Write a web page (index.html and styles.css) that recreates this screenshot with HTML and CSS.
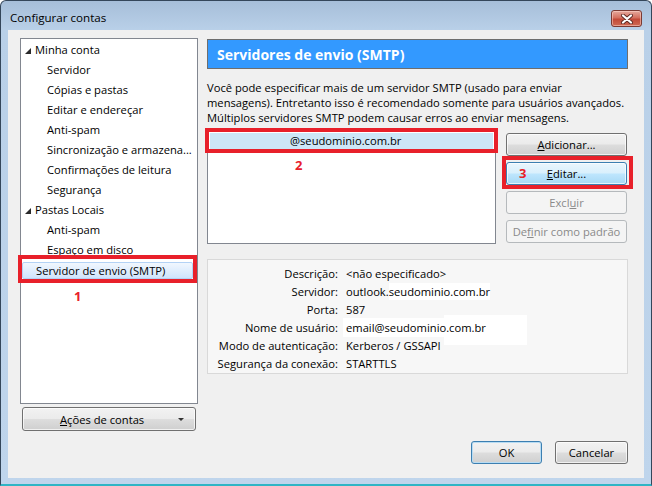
FILE: index.html
```html
<!DOCTYPE html>
<html lang="pt-BR">

<head>
    <meta charset="UTF-8">
    <title>Configurar contas</title>
    <link rel="stylesheet" href="styles.css">
</head>

<body>
    <div class="window">
        <div class="titlebar">
            <span class="title">Configurar contas</span>
            <button class="close" aria-label="Fechar">
                <svg width="12" height="10" viewBox="0 0 12 10">
                    <path d="M2 1.5 L10 8.5 M10 1.5 L2 8.5" stroke="#5c2a24" stroke-width="4" stroke-linecap="round" />
                    <path d="M2 1.5 L10 8.5 M10 1.5 L2 8.5" stroke="#ffffff" stroke-width="2.2" stroke-linecap="round" />
                </svg>
            </button>
        </div>

        <div class="client">
            <div class="main">
                <div class="side">
                    <ul class="tree">
                        <li class="group"><span class="twisty"></span>Minha conta</li>
                        <li class="sub">Servidor</li>
                        <li class="sub">Cópias e pastas</li>
                        <li class="sub">Editar e endereçar</li>
                        <li class="sub">Anti-spam</li>
                        <li class="sub">Sincronização e armazena...</li>
                        <li class="sub">Confirmações de leitura</li>
                        <li class="sub">Segurança</li>
                        <li class="group"><span class="twisty"></span>Pastas Locais</li>
                        <li class="sub">Anti-spam</li>
                        <li class="sub">Espaço em disco</li>
                        <li class="top sel">Servidor de envio (SMTP)</li>
                    </ul>
                    <div class="mark-box mark-smtp"></div>
                    <span class="mark-num num-1">1</span>
                    <button class="btn actions"><span><u>A</u>ções de contas</span><span class="caret"></span></button>
                </div>

                <div class="panel">
                    <h2 class="heading">Servidores de envio (SMTP)</h2>
                    <p class="intro">Você pode especificar mais de um servidor SMTP (usado para enviar<br>mensagens). Entretanto isso é recomendado somente para usuários avançados.<br>Múltiplos servidores SMTP podem causar erros ao enviar mensagens.</p>

                    <div class="servers">
                        <div class="server-list">
                            <div class="server sel">@seudominio.com.br</div>
                        </div>
                        <div class="server-btns">
                            <button class="btn"><u>A</u>dicionar...</button>
                            <button class="btn hot"><u>E</u>ditar...</button>
                            <button class="btn" disabled>Excl<u>u</u>ir</button>
                            <button class="btn" disabled>De<u>f</u>inir como padrão</button>
                        </div>
                        <div class="mark-box mark-row"></div>
                        <div class="mark-box mark-edit"></div>
                        <span class="mark-num num-2">2</span>
                        <span class="mark-num num-3">3</span>
                    </div>

                    <div class="details">
                        <span class="label">Descrição:</span><span class="value">&lt;não especificado&gt;</span>
                        <span class="label">Servidor:</span><span class="value">outlook.<span class="blank">seudominio.com.br</span></span>
                        <span class="label">Porta:</span><span class="value">587</span>
                        <span class="label">Nome de usuário:</span><span class="value user"><span class="blank">email@seudominio.com.br</span></span>
                        <span class="label">Modo de autenticação:</span><span class="value">Kerberos / GSSAPI</span>
                        <span class="label">Segurança da conexão:</span><span class="value">STARTTLS</span>
                    </div>
                </div>
            </div>

            <div class="footer">
                <button class="btn ok">OK</button>
                <button class="btn cancel">Cancelar</button>
            </div>
        </div>
    </div>
</body>

</html>
```

FILE: styles.css
```css
* {
    box-sizing: border-box;
}

body {
    margin: 0;
    font-family: "Open Sans", "Noto Sans", sans-serif;
    font-size: 11.2px;
    color: #000;
}

.window {
    width: 652px;
    height: 486px;
    display: flex;
    flex-direction: column;
    padding: 0 7px 6px;
    border: 1px solid #34465a;
    border-bottom: 2px solid #2fb5c5;
    border-radius: 6px 6px 0 0;
    background: linear-gradient(#a6bed9 0, #b9d0e8 29px, #bfd5ec 100%);
}

.titlebar {
    height: 29px;
    display: flex;
    justify-content: space-between;
    align-items: flex-start;
}

.title {
    margin: 9px 0 0 2px;
    font-size: 11.6px;
}

.close {
    width: 31px;
    height: 17px;
    margin: 9px 2px 0 0;
    padding: 0;
    display: flex;
    align-items: center;
    justify-content: center;
    border: 1px solid #7a3a33;
    border-radius: 3px;
    background: linear-gradient(#e5a99d 0, #d4705f 45%, #c24a38 55%, #cf6a55 100%);
    box-shadow: inset 0 0 0 1px rgba(255, 220, 210, 0.5);
}

.client {
    flex: 1;
    display: flex;
    flex-direction: column;
    padding: 8px 16px 14px 12px;
    background: #f0f0f0;
}

.main {
    display: flex;
    gap: 9px;
}

.btn {
    height: 23px;
    padding: 0;
    font-family: inherit;
    font-size: 11.2px;
    color: #000;
    border: 1px solid #707070;
    border-radius: 3px;
    background: linear-gradient(#f2f2f2 0, #ebebeb 48%, #dddddd 52%, #cfcfcf 100%);
    box-shadow: inset 0 0 0 1px rgba(255, 255, 255, 0.7);
}

.btn.hot {
    border-color: #3c7fb1;
    background: linear-gradient(#eaf6fd 0, #d9f0fc 48%, #bee6fd 52%, #a7d9f5 100%);
}

.btn:disabled {
    color: #8a8a8a;
    border-color: #b5b9bc;
    background: #f4f4f4;
    box-shadow: none;
}

/* coluna da esquerda */

.side {
    position: relative;
    width: 178px;
}

.tree {
    list-style: none;
    margin: 0;
    height: 366px;
    padding: 1px 0;
    border: 1px solid #828790;
    background: #fff;
}

.tree li {
    height: 20px;
    line-height: 20px;
    white-space: nowrap;
}

.tree .group {
    position: relative;
    padding-left: 14px;
}

.tree .sub {
    padding-left: 26px;
}

.tree .top {
    padding-left: 14px;
}

.tree .sel {
    height: 17px;
    line-height: 15px;
    margin: 2px 4px 1px 1px;
    padding-left: 13px;
    border: 1px solid #b3d2f5;
    border-radius: 2px;
    background: linear-gradient(#f1f7fe, #cfe4fc);
}

.twisty {
    position: absolute;
    left: 4px;
    top: 8px;
    width: 0;
    height: 0;
    border-top: 6px solid transparent;
    border-right: 6px solid #2a2a2a;
}

.btn.actions {
    width: 174px;
    height: 24px;
    margin: 3px 0 0 2px;
    display: flex;
    align-items: center;
    padding: 0 11px 0 37px;
}

.caret {
    margin-left: auto;
    width: 0;
    height: 0;
    border-left: 3px solid transparent;
    border-right: 3px solid transparent;
    border-top: 3px solid #333;
}

/* coluna da direita */

.panel {
    width: 421px;
    margin-top: 1px;
}

.heading {
    height: 30px;
    margin: 0;
    display: flex;
    align-items: center;
    padding-left: 9px;
    border: 1px solid #6e6e6e;
    background: #3399ff;
    color: #fff;
    font-size: 14px;
    font-weight: bold;
}

.intro {
    margin: 11px 0 5px;
    line-height: 15px;
    white-space: nowrap;
}

.servers {
    position: relative;
    display: flex;
    gap: 10px;
}

.server-list {
    width: 289px;
    height: 114px;
    padding: 2px;
    border: 1px solid #828790;
    background: #fff;
}

.server {
    height: 16px;
    line-height: 16px;
    padding-left: 80px;
}

.server.sel {
    background: #cde6f7;
}

.server-btns {
    width: 121px;
    padding-top: 3px;
    display: flex;
    flex-direction: column;
    gap: 6px;
}

.details {
    position: relative;
    z-index: 0;
    height: 115px;
    margin-top: 15px;
    padding-top: 5px;
    display: grid;
    grid-template-columns: 130px 1fr;
    grid-auto-rows: 18px;
    column-gap: 8px;
    border: 1px solid #d9d9d9;
    background: #f7f7f7;
    line-height: 18px;
}

.label {
    text-align: right;
    white-space: nowrap;
}

.value {
    white-space: nowrap;
}

.blank {
    background: #fff;
    padding: 1px 0;
}

.user {
    position: relative;
    margin-left: -3px;
}

.user .blank {
    padding: 2px 2px 2px 3px;
}

.user::after {
    content: "";
    position: absolute;
    left: 101px;
    top: -4px;
    width: 83px;
    height: 30px;
    background: #fff;
    z-index: -1;
}

/* rodapé */

.footer {
    margin-top: 10px;
    display: flex;
    justify-content: flex-end;
    gap: 13px;
}

.btn.ok {
    width: 71px;
    border-color: #3c7fb1;
    box-shadow: inset 0 0 0 1px #b8dcf3;
}

.btn.cancel {
    width: 73px;
}

/* marcações vermelhas */

.mark-box {
    position: absolute;
    border: 4px solid #e8202a;
}

.mark-num {
    position: absolute;
    color: #e8202a;
    font-weight: bold;
    font-size: 13px;
    line-height: 15px;
}

.mark-smtp {
    left: -2px;
    top: 217px;
    width: 179px;
    height: 28px;
}

.num-1 {
    left: 54px;
    top: 251px;
}

.mark-row {
    left: -2px;
    top: -2px;
    width: 293px;
    height: 25px;
}

.mark-edit {
    left: 295px;
    top: 26px;
    width: 131px;
    height: 33px;
}

.num-2 {
    left: 88px;
    top: 28px;
}

.num-3 {
    left: 312px;
    top: 36px;
}
```
